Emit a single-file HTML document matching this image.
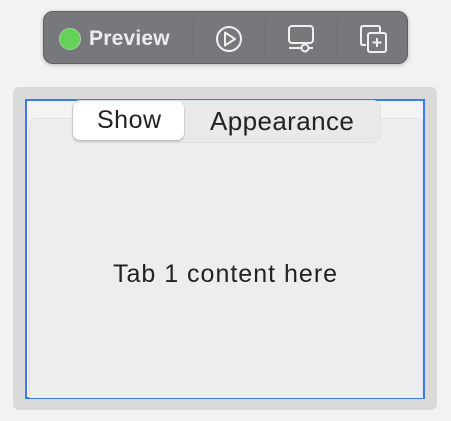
<!DOCTYPE html>
<html><head><style>
body{margin:0;width:451px;height:421px;background:#f2f2f2;position:relative;overflow:hidden;font-family:"Liberation Sans",sans-serif;}
.tb{position:absolute;left:43px;top:11px;width:363px;height:51px;background:#76787c;border:1px solid #5f6165;border-radius:10px;box-shadow:0 1px 4px rgba(0,0,0,.25);}
.dot{position:absolute;left:59px;top:28px;width:20px;height:20px;border-radius:50%;background:#63d15a;border:1px solid #9ed79a;}
.pv{position:absolute;left:89px;top:27px;font-size:21px;color:#ececec;font-weight:bold;letter-spacing:0.2px;}
.sep{position:absolute;top:20px;width:1px;height:36px;background:#6a6c70;}
.panel{position:absolute;left:13px;top:87px;width:424px;height:323px;background:#dadada;border-radius:6px;}
.blue{position:absolute;left:25px;top:99px;width:396px;height:296px;border:2px solid #3a7bf2;background:#f4f4f4;}
.box{position:absolute;left:29px;top:118px;width:392px;height:279px;background:#ededed;border:1px solid #e2e2e2;border-bottom:none;border-radius:5px 5px 0 0;}
.seg{position:absolute;left:72px;top:100px;width:307px;height:41px;background:#e9e9e9;border:1px solid #e0e0e0;border-radius:8px;}
.sel{position:absolute;left:73px;top:101px;width:111px;height:39px;background:#fff;border-radius:7px;box-shadow:0 1px 2px rgba(0,0,0,.3);}
.t{position:absolute;font-size:25px;color:#222;}
.c{position:absolute;left:0;width:451px;top:260px;text-align:center;font-size:25px;letter-spacing:1px;color:#222;}
</style></head><body>
<div class="tb"></div>
<div class="dot"></div>
<div class="pv">Preview</div>
<div class="sep" style="left:193px"></div>
<div class="sep" style="left:265px"></div>
<div class="sep" style="left:337px"></div>
<svg width="451" height="70" style="position:absolute;left:0;top:0" fill="none" stroke="#f0f0f0" stroke-width="2">
<circle cx="229" cy="39" r="12"/>
<path d="M225 32.5 L235 39 L225 45.5 Z" stroke-linejoin="round"/>
<rect x="289" y="26" width="24" height="17" rx="3"/>
<path d="M289 48 H301 M309 48 H313"/>
<circle cx="305" cy="48" r="3.5"/>
<path d="M366 45 H363 Q361 45 361 43 V28 Q361 26 363 26 H378 Q380 26 380 28 V33"/>
<rect x="368" y="33" width="18" height="19" rx="2"/>
<path d="M377 38 V47 M372.5 42.5 H381.5"/>
</svg>
<div class="panel"></div>
<div class="blue"></div>
<div class="box"></div>
<div class="seg"></div>
<div class="sel"></div>
<div class="t" style="left:97px;top:106px;letter-spacing:0.5px">Show</div>
<div class="t" style="left:210px;top:106px;font-size:26px;letter-spacing:0.4px">Appearance</div>
<div class="c">Tab 1 content here</div>
</body></html>
